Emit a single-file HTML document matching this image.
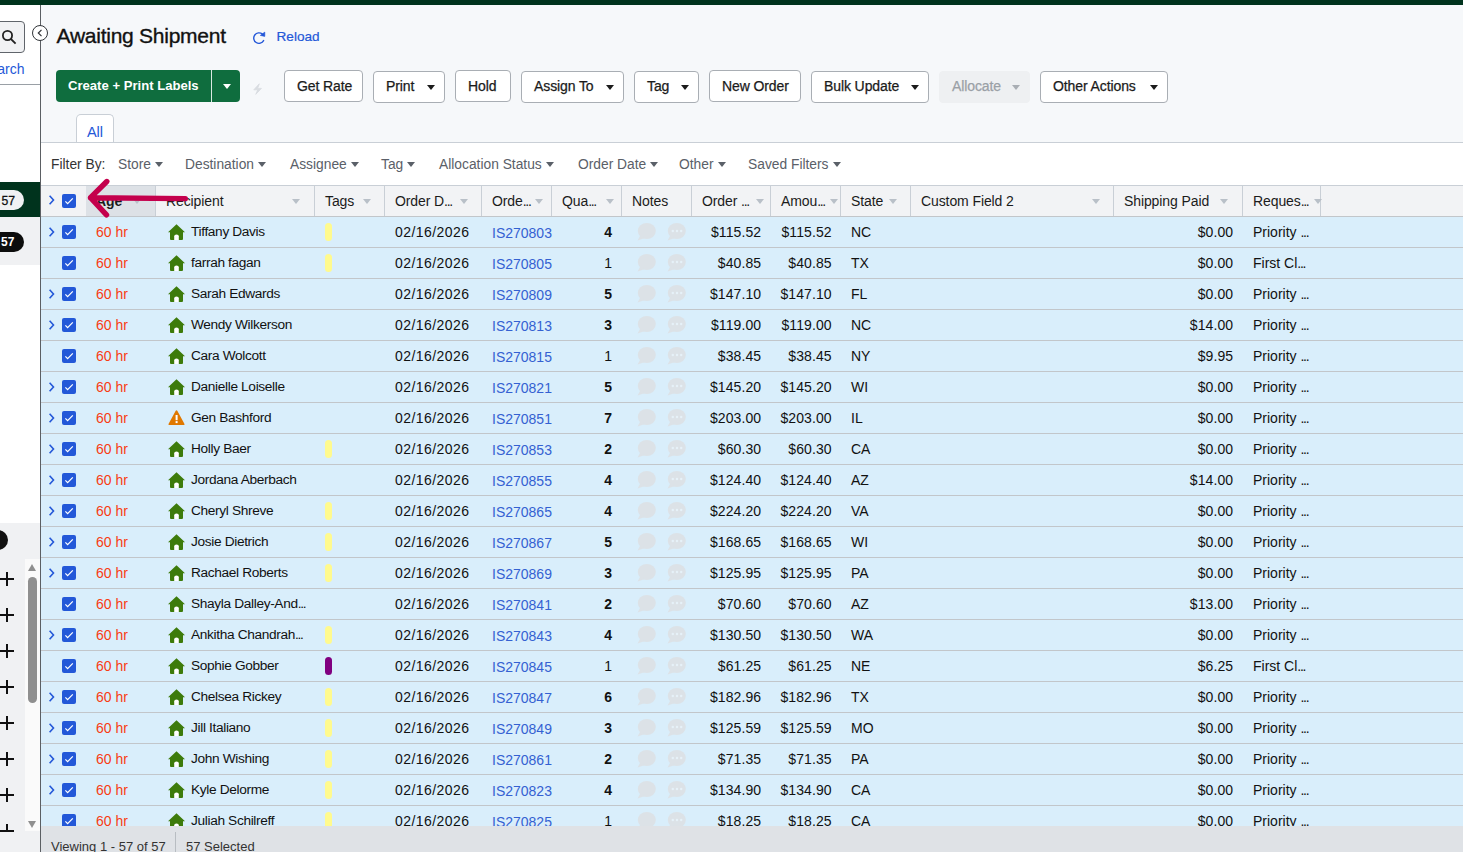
<!DOCTYPE html>
<html><head><meta charset="utf-8"><style>
*{box-sizing:border-box}
html,body{margin:0;padding:0;width:1463px;height:852px;overflow:hidden;background:#f6f8fa;font-family:"Liberation Sans",sans-serif;color:#1b1b1b}
.abs{position:absolute}
#topbar{position:absolute;left:0;top:0;width:1463px;height:5px;background:#00331d}
#side{position:absolute;left:0;top:5px;width:40px;height:847px;background:#fff;overflow:hidden}
#sideborder{position:absolute;left:40px;top:5px;width:1px;height:847px;background:#5b5f63}
#main{position:absolute;left:41px;top:5px;width:1422px;height:847px;overflow:hidden}
.search{position:absolute;left:-8px;top:16px;width:33px;height:32px;border:1px solid #60656b;border-radius:4px;background:#f1f2f4}
.collapse{position:absolute;left:32px;top:25px;width:16px;height:16px;border:1px solid #303438;border-radius:50%;background:#fff}
h1{position:absolute;left:15.5px;top:18.5px;margin:0;font-size:21px;font-weight:normal;color:#111;letter-spacing:-0.25px;line-height:24px;-webkit-text-stroke:0.35px #111}
.reload{position:absolute;left:235.5px;top:24.3px;font-size:13.6px;color:#2458d8;-webkit-text-stroke:0.2px #2458d8}
.btn{position:absolute;top:65px;height:32px;border:1px solid #a9aeb4;border-radius:4px;background:#fff;font-size:14px;letter-spacing:-0.1px;color:#1b1b1b;line-height:31.4px;padding-left:12px;white-space:nowrap;-webkit-text-stroke:0.25px #1b1b1b}
.btn.dd{top:66px;line-height:29.4px}
.btn.dd .car{top:13px}
.btn .car{position:absolute;right:9px;top:14px;width:0;height:0;border-left:4.5px solid transparent;border-right:4.5px solid transparent;border-top:5px solid #1b1b1b}
.btn.dis{background:#eef0f2;border-color:#eef0f2;color:#9aa0a6;-webkit-text-stroke:0.25px #9aa0a6}
.btn.dis .car{border-top-color:#a9aeb4}
.green{position:absolute;left:15px;top:65px;width:184px;height:32px;background:#0f6d3e;border-radius:4px;color:#fff;font-weight:bold;font-size:13.1px;line-height:32px}
.green .gt{position:absolute;left:12px;top:0}
.green .div{position:absolute;left:155px;top:0;width:1px;height:32px;background:#fff;opacity:0.85}
.green .car{position:absolute;left:167px;top:14px;width:0;height:0;border-left:4px solid transparent;border-right:4px solid transparent;border-top:5px solid #fff}
.tab{position:absolute;left:35px;top:109px;width:38px;height:29px;border:1px solid #c9cfd6;border-bottom:none;border-radius:5px 5px 0 0;background:#fff;color:#2458d8;font-size:14.6px;text-align:center;line-height:35px}
.tabline{position:absolute;left:0;top:137px;width:1422px;height:1px;background:#c9cfd6}
.filter{position:absolute;left:0;top:138px;width:1422px;height:42px;background:#fff}
.fl{position:absolute;top:14px;font-size:13.8px;color:#5a6068;white-space:nowrap}
.fl .c{display:inline-block;margin-left:4px;vertical-align:2px;width:0;height:0;border-left:4.5px solid transparent;border-right:4.5px solid transparent;border-top:5px solid #5a6068}
.header{position:absolute;left:0;top:180px;width:1422px;height:32px;background:#f2f3f5;border-top:1px solid #c9cfd6;border-bottom:1px solid #c9cfd6}
.hdiv{position:absolute;top:0;width:1px;height:30px;background:#c9cfd6}
.sortbg{position:absolute;left:45px;top:0;width:69px;height:30px;background:#dde1e6}
.el{letter-spacing:-1.3px}
.ht{position:absolute;top:7px;font-size:14px;color:#1b1b1b;white-space:nowrap;letter-spacing:-0.1px}
.ht.sorted{font-weight:bold}
.tri{position:absolute;top:13px;width:0;height:0;border-left:4.5px solid transparent;border-right:4.5px solid transparent;border-top:5px solid #b9c0c8}
.row{position:absolute;left:0;width:1422px;height:31px;background:#d9eefb;border-top:1px solid #c2c6ca}
.a{position:absolute;line-height:0}
.t{position:absolute;top:6.8px;font-size:14px;white-space:nowrap;color:#111}
.nm{font-size:13.7px;letter-spacing:-0.35px;top:7px}
.dt{letter-spacing:0.45px}
.mn{letter-spacing:0.1px}
.t.r{text-align:right}
.t.b{font-weight:bold}
.age{color:#f83c12}
.lnk{color:#3461d2;margin-top:1px}
.cb{display:inline-block;width:14px;height:14px;background:#2358d8;border-radius:2px;line-height:0}
.pill{position:absolute;left:284px;top:6px;width:7px;height:18px;border-radius:3.5px}
.pill.y{background:#fffa8e}
.pill.p{background:#800080}
.hchev{}
.status{position:absolute;left:0;top:821px;width:1422px;height:26px;background:#dfe2e6}
.st{position:absolute;top:12.8px;font-size:13px;color:#333}
.sdiv{position:absolute;left:134px;top:6px;width:1px;height:20px;background:#b8bdc2}
.plus{position:absolute;left:0;width:14px;height:14px}
.plus:before{content:"";position:absolute;left:0;top:6px;width:14px;height:2px;background:#111}
.plus:after{content:"";position:absolute;left:6px;top:0;width:2px;height:14px;background:#111}
</style></head><body>
<div id="topbar"></div>
<div id="side">
  <div class="search"><svg style="position:absolute;left:8px;top:7px" width="16" height="16" viewBox="0 0 16 16"><circle cx="6.5" cy="6.5" r="4.6" stroke="#222" stroke-width="1.8" fill="none"/><path d="M9.8 9.8 L14.6 14.6" stroke="#222" stroke-width="1.9"/></svg></div>
  <span style="position:absolute;left:-2.8px;top:56.2px;font-size:14px;color:#2458d8">arch</span>
  <div style="position:absolute;left:0;top:79px;width:40px;height:1px;background:#9aa0a6"></div>
  <div style="position:absolute;left:0;top:177px;width:40px;height:35px;background:#00331d"></div>
  <div style="position:absolute;left:-10px;top:185px;width:34px;height:20px;border-radius:10px;background:#f0f1f3;font-size:12.2px;color:#111;line-height:22px;padding-left:11.5px;-webkit-text-stroke:0.3px #111">57</div>
  <div style="position:absolute;left:0;top:212px;width:40px;height:48px;background:#f0f1f3"></div>
  <div style="position:absolute;left:-10px;top:227px;width:34px;height:20px;border-radius:10px;background:#0d0d0d;font-size:12px;color:#fff;font-weight:bold;line-height:20px;padding-left:11px">57</div>
  <div style="position:absolute;left:0;top:518px;width:40px;height:329px;background:#f0f1f3"></div>
  <div style="position:absolute;left:-12px;top:525px;width:20px;height:20px;border-radius:50%;background:#111"></div>
  <div style="position:absolute;left:0;top:554px;width:40px;height:273px;overflow:hidden"><span class="plus" style="top:13px"></span><span class="plus" style="top:49px"></span><span class="plus" style="top:85px"></span><span class="plus" style="top:121px"></span><span class="plus" style="top:157px"></span><span class="plus" style="top:193px"></span><span class="plus" style="top:229px"></span><span class="plus" style="top:265px"></span></div>
  <div style="position:absolute;left:25px;top:554px;width:15px;height:272px;background:#fafafa"></div>
  <div style="position:absolute;left:28px;top:559px;width:0;height:0;border-left:4.5px solid transparent;border-right:4.5px solid transparent;border-bottom:7px solid #8f8f8f"></div>
  <div style="position:absolute;left:28px;top:572px;width:9px;height:126px;border-radius:4.5px;background:#8f8f8f"></div>
  <div style="position:absolute;left:28px;top:816px;width:0;height:0;border-left:4.5px solid transparent;border-right:4.5px solid transparent;border-top:7px solid #8f8f8f"></div>
</div>
<div id="sideborder"></div>
<div class="collapse"><svg style="position:absolute;left:3px;top:3px" width="8" height="8" viewBox="0 0 8 8"><path d="M5.5 0.8 L2.3 4 L5.5 7.2" stroke="#303438" stroke-width="1.2" fill="none"/></svg></div>
<div id="main">
  <h1>Awaiting Shipment</h1>
  <svg style="position:absolute;left:209px;top:23px" width="18" height="18" viewBox="0 0 18 18"><path d="M12.4 6.1 A5.25 5.25 0 1 0 13.6 12.6" stroke="#2458d8" stroke-width="1.4" fill="none" stroke-linecap="round"/><path d="M14.8 4.1 L14.8 8.4 L10.3 7.4 Z" fill="#2458d8" stroke="#2458d8" stroke-width="0.6" stroke-linejoin="round"/></svg>
  <span class="reload">Reload</span>
  <div class="green"><span class="gt">Create + Print Labels</span><span class="div"></span><span class="car"></span></div>
  <svg style="position:absolute;left:211px;top:78px" width="11" height="12" viewBox="0 0 11 12"><path d="M7.3 0.8 L1.8 6.8 L5.8 6.8 L3.8 11.3 L9.4 5.4 L5.6 5.4 Z" fill="#d9dde1" stroke="#d9dde1" stroke-width="0.9" stroke-linejoin="round"/></svg>
  <div class="btn" style="left:243px;width:79px">Get Rate</div><div class="btn dd" style="left:332px;width:72px">Print<span class=car></span></div><div class="btn" style="left:414px;width:56px">Hold</div><div class="btn dd" style="left:480px;width:103px">Assign To<span class=car></span></div><div class="btn dd" style="left:593px;width:65px">Tag<span class=car></span></div><div class="btn" style="left:668px;width:92px">New Order</div><div class="btn dd" style="left:770px;width:118px">Bulk Update<span class=car></span></div><div class="btn dd dis" style="left:898px;width:91px">Allocate<span class=car></span></div><div class="btn dd" style="left:999px;width:128px">Other Actions<span class=car></span></div>
  <div class="tab">All</div>
  <div class="tabline"></div>
  <div class="filter">
    <span class="fl" style="left:10px;color:#333">Filter By:</span>
    <span class="fl" style="left:77px">Store<span class="c"></span></span><span class="fl" style="left:144px">Destination<span class="c"></span></span><span class="fl" style="left:249px">Assignee<span class="c"></span></span><span class="fl" style="left:340px">Tag<span class="c"></span></span><span class="fl" style="left:398px">Allocation Status<span class="c"></span></span><span class="fl" style="left:537px">Order Date<span class="c"></span></span><span class="fl" style="left:638px">Other<span class="c"></span></span><span class="fl" style="left:707px">Saved Filters<span class="c"></span></span>
  </div>
  <div class="header"><span class="a" style="left:7px;top:9px"><svg class="chev" width="8" height="11" viewBox="0 0 8 11"><path d="M1.6 0.7 L5.5 5 L1.6 9.3" stroke="#2458d8" stroke-width="1.6" fill="none"/></svg></span><span class="a" style="left:21px;top:8px"><span class="cb"><svg width="14" height="14" viewBox="0 0 14 14"><path d="M3.4 7.4 L5.6 9.6 L10.8 4.4" stroke="#fff" stroke-width="1.25" fill="none"/></svg></span></span><div class="sortbg"></div><span class="hdiv" style="left:114px"></span><span class="hdiv" style="left:273px"></span><span class="hdiv" style="left:343px"></span><span class="hdiv" style="left:440px"></span><span class="hdiv" style="left:510px"></span><span class="hdiv" style="left:580px"></span><span class="hdiv" style="left:650px"></span><span class="hdiv" style="left:729px"></span><span class="hdiv" style="left:799px"></span><span class="hdiv" style="left:869px"></span><span class="hdiv" style="left:1072px"></span><span class="hdiv" style="left:1201px"></span><span class="hdiv" style="left:1279px"></span><span class="ht sorted" style="left:55px">Age</span><span class="tri" style="left:92px"></span><span class="ht" style="left:125px">Recipient</span><span class="tri" style="left:251.2px"></span><span class="ht" style="left:284px">Tags</span><span class="tri" style="left:321.6px"></span><span class="ht" style="left:354px">Order D<span class="el">...</span></span><span class="tri" style="left:419.3px"></span><span class="ht" style="left:451px">Orde<span class="el">...</span></span><span class="tri" style="left:493.70000000000005px"></span><span class="ht" style="left:521px">Qua<span class="el">...</span></span><span class="tri" style="left:564.8px"></span><span class="ht" style="left:591px">Notes</span><span class="ht" style="left:661px">Order <span class="el">...</span></span><span class="tri" style="left:715.4px"></span><span class="ht" style="left:740px">Amou<span class="el">...</span></span><span class="tri" style="left:789.2px"></span><span class="ht" style="left:810px">State</span><span class="tri" style="left:847.6px"></span><span class="ht" style="left:880px">Custom Field 2</span><span class="tri" style="left:1050.6px"></span><span class="ht" style="left:1083px">Shipping Paid</span><span class="tri" style="left:1179.3px"></span><span class="ht" style="left:1212px">Reques<span class="el">...</span></span><span class="tri" style="left:1273px"></span></div>
  <div class="row" style="top:211px"><span class="a" style="left:7px;top:10px"><svg class="chev" width="8" height="11" viewBox="0 0 8 11"><path d="M1.6 0.7 L5.5 5 L1.6 9.3" stroke="#2458d8" stroke-width="1.6" fill="none"/></svg></span><span class="a" style="left:21px;top:8px"><span class="cb"><svg width="14" height="14" viewBox="0 0 14 14"><path d="M3.4 7.4 L5.6 9.6 L10.8 4.4" stroke="#fff" stroke-width="1.25" fill="none"/></svg></span></span><span class="t age" style="left:55px">60 hr</span><span class="a" style="left:126.5px;top:7px"><svg class="ic" width="17" height="17" viewBox="0 0 17 17"><path d="M8.5 0.3 L17 8.2 L15 8.2 L15 15 Q15 16 14 16 L3 16 Q2 16 2 15 L2 8.2 L0 8.2 Z" fill="#3d7b0b"/><path d="M6.2 16 L6.2 12.2 Q6.2 10.4 8.5 10.4 Q10.8 10.4 10.8 12.2 L10.8 16 Z" fill="#fff"/></svg></span><span class="t nm" style="left:150px">Tiffany Davis</span><span class="pill y"></span><span class="t dt" style="left:354px">02/16/2026</span><span class="t lnk" style="left:451px">IS270803</span><span class="t r b" style="right:851px">4</span><span class="a" style="left:596.3px;top:5.5px"><svg width="19" height="18" viewBox="0 0 19 18"><ellipse cx="9.8" cy="8" rx="9" ry="8" fill="#dce2e7"/><path d="M3.5 12 L0.6 17.4 L8 15Z" fill="#dce2e7"/></svg></span><span class="a" style="left:626.3px;top:5.5px"><svg width="19" height="18" viewBox="0 0 19 18"><ellipse cx="9.8" cy="8" rx="9" ry="8" fill="#dce2e7"/><path d="M3.5 12 L0.6 17.4 L8 15Z" fill="#dce2e7"/><circle cx="5.8" cy="8" r="1.2" fill="#e6f1f8"/><circle cx="10" cy="8" r="1.2" fill="#e6f1f8"/><circle cx="14.2" cy="8" r="1.2" fill="#e6f1f8"/></svg></span><span class="t r mn" style="right:701.8px">$115.52</span><span class="t r mn" style="right:631.3px">$115.52</span><span class="t" style="left:810px">NC</span><span class="t r mn" style="right:229.8px">$0.00</span><span class="t" style="left:1212px">Priority <span class=el>...</span></span></div><div class="row" style="top:242px"><span class="a" style="left:21px;top:8px"><span class="cb"><svg width="14" height="14" viewBox="0 0 14 14"><path d="M3.4 7.4 L5.6 9.6 L10.8 4.4" stroke="#fff" stroke-width="1.25" fill="none"/></svg></span></span><span class="t age" style="left:55px">60 hr</span><span class="a" style="left:126.5px;top:7px"><svg class="ic" width="17" height="17" viewBox="0 0 17 17"><path d="M8.5 0.3 L17 8.2 L15 8.2 L15 15 Q15 16 14 16 L3 16 Q2 16 2 15 L2 8.2 L0 8.2 Z" fill="#3d7b0b"/><path d="M6.2 16 L6.2 12.2 Q6.2 10.4 8.5 10.4 Q10.8 10.4 10.8 12.2 L10.8 16 Z" fill="#fff"/></svg></span><span class="t nm" style="left:150px">farrah fagan</span><span class="pill y"></span><span class="t dt" style="left:354px">02/16/2026</span><span class="t lnk" style="left:451px">IS270805</span><span class="t r" style="right:851px">1</span><span class="a" style="left:596.3px;top:5.5px"><svg width="19" height="18" viewBox="0 0 19 18"><ellipse cx="9.8" cy="8" rx="9" ry="8" fill="#dce2e7"/><path d="M3.5 12 L0.6 17.4 L8 15Z" fill="#dce2e7"/></svg></span><span class="a" style="left:626.3px;top:5.5px"><svg width="19" height="18" viewBox="0 0 19 18"><ellipse cx="9.8" cy="8" rx="9" ry="8" fill="#dce2e7"/><path d="M3.5 12 L0.6 17.4 L8 15Z" fill="#dce2e7"/><circle cx="5.8" cy="8" r="1.2" fill="#e6f1f8"/><circle cx="10" cy="8" r="1.2" fill="#e6f1f8"/><circle cx="14.2" cy="8" r="1.2" fill="#e6f1f8"/></svg></span><span class="t r mn" style="right:701.8px">$40.85</span><span class="t r mn" style="right:631.3px">$40.85</span><span class="t" style="left:810px">TX</span><span class="t r mn" style="right:229.8px">$0.00</span><span class="t" style="left:1212px">First Cl<span class=el>...</span></span></div><div class="row" style="top:273px"><span class="a" style="left:7px;top:10px"><svg class="chev" width="8" height="11" viewBox="0 0 8 11"><path d="M1.6 0.7 L5.5 5 L1.6 9.3" stroke="#2458d8" stroke-width="1.6" fill="none"/></svg></span><span class="a" style="left:21px;top:8px"><span class="cb"><svg width="14" height="14" viewBox="0 0 14 14"><path d="M3.4 7.4 L5.6 9.6 L10.8 4.4" stroke="#fff" stroke-width="1.25" fill="none"/></svg></span></span><span class="t age" style="left:55px">60 hr</span><span class="a" style="left:126.5px;top:7px"><svg class="ic" width="17" height="17" viewBox="0 0 17 17"><path d="M8.5 0.3 L17 8.2 L15 8.2 L15 15 Q15 16 14 16 L3 16 Q2 16 2 15 L2 8.2 L0 8.2 Z" fill="#3d7b0b"/><path d="M6.2 16 L6.2 12.2 Q6.2 10.4 8.5 10.4 Q10.8 10.4 10.8 12.2 L10.8 16 Z" fill="#fff"/></svg></span><span class="t nm" style="left:150px">Sarah Edwards</span><span class="t dt" style="left:354px">02/16/2026</span><span class="t lnk" style="left:451px">IS270809</span><span class="t r b" style="right:851px">5</span><span class="a" style="left:596.3px;top:5.5px"><svg width="19" height="18" viewBox="0 0 19 18"><ellipse cx="9.8" cy="8" rx="9" ry="8" fill="#dce2e7"/><path d="M3.5 12 L0.6 17.4 L8 15Z" fill="#dce2e7"/></svg></span><span class="a" style="left:626.3px;top:5.5px"><svg width="19" height="18" viewBox="0 0 19 18"><ellipse cx="9.8" cy="8" rx="9" ry="8" fill="#dce2e7"/><path d="M3.5 12 L0.6 17.4 L8 15Z" fill="#dce2e7"/><circle cx="5.8" cy="8" r="1.2" fill="#e6f1f8"/><circle cx="10" cy="8" r="1.2" fill="#e6f1f8"/><circle cx="14.2" cy="8" r="1.2" fill="#e6f1f8"/></svg></span><span class="t r mn" style="right:701.8px">$147.10</span><span class="t r mn" style="right:631.3px">$147.10</span><span class="t" style="left:810px">FL</span><span class="t r mn" style="right:229.8px">$0.00</span><span class="t" style="left:1212px">Priority <span class=el>...</span></span></div><div class="row" style="top:304px"><span class="a" style="left:7px;top:10px"><svg class="chev" width="8" height="11" viewBox="0 0 8 11"><path d="M1.6 0.7 L5.5 5 L1.6 9.3" stroke="#2458d8" stroke-width="1.6" fill="none"/></svg></span><span class="a" style="left:21px;top:8px"><span class="cb"><svg width="14" height="14" viewBox="0 0 14 14"><path d="M3.4 7.4 L5.6 9.6 L10.8 4.4" stroke="#fff" stroke-width="1.25" fill="none"/></svg></span></span><span class="t age" style="left:55px">60 hr</span><span class="a" style="left:126.5px;top:7px"><svg class="ic" width="17" height="17" viewBox="0 0 17 17"><path d="M8.5 0.3 L17 8.2 L15 8.2 L15 15 Q15 16 14 16 L3 16 Q2 16 2 15 L2 8.2 L0 8.2 Z" fill="#3d7b0b"/><path d="M6.2 16 L6.2 12.2 Q6.2 10.4 8.5 10.4 Q10.8 10.4 10.8 12.2 L10.8 16 Z" fill="#fff"/></svg></span><span class="t nm" style="left:150px">Wendy Wilkerson</span><span class="t dt" style="left:354px">02/16/2026</span><span class="t lnk" style="left:451px">IS270813</span><span class="t r b" style="right:851px">3</span><span class="a" style="left:596.3px;top:5.5px"><svg width="19" height="18" viewBox="0 0 19 18"><ellipse cx="9.8" cy="8" rx="9" ry="8" fill="#dce2e7"/><path d="M3.5 12 L0.6 17.4 L8 15Z" fill="#dce2e7"/></svg></span><span class="a" style="left:626.3px;top:5.5px"><svg width="19" height="18" viewBox="0 0 19 18"><ellipse cx="9.8" cy="8" rx="9" ry="8" fill="#dce2e7"/><path d="M3.5 12 L0.6 17.4 L8 15Z" fill="#dce2e7"/><circle cx="5.8" cy="8" r="1.2" fill="#e6f1f8"/><circle cx="10" cy="8" r="1.2" fill="#e6f1f8"/><circle cx="14.2" cy="8" r="1.2" fill="#e6f1f8"/></svg></span><span class="t r mn" style="right:701.8px">$119.00</span><span class="t r mn" style="right:631.3px">$119.00</span><span class="t" style="left:810px">NC</span><span class="t r mn" style="right:229.8px">$14.00</span><span class="t" style="left:1212px">Priority <span class=el>...</span></span></div><div class="row" style="top:335px"><span class="a" style="left:21px;top:8px"><span class="cb"><svg width="14" height="14" viewBox="0 0 14 14"><path d="M3.4 7.4 L5.6 9.6 L10.8 4.4" stroke="#fff" stroke-width="1.25" fill="none"/></svg></span></span><span class="t age" style="left:55px">60 hr</span><span class="a" style="left:126.5px;top:7px"><svg class="ic" width="17" height="17" viewBox="0 0 17 17"><path d="M8.5 0.3 L17 8.2 L15 8.2 L15 15 Q15 16 14 16 L3 16 Q2 16 2 15 L2 8.2 L0 8.2 Z" fill="#3d7b0b"/><path d="M6.2 16 L6.2 12.2 Q6.2 10.4 8.5 10.4 Q10.8 10.4 10.8 12.2 L10.8 16 Z" fill="#fff"/></svg></span><span class="t nm" style="left:150px">Cara Wolcott</span><span class="t dt" style="left:354px">02/16/2026</span><span class="t lnk" style="left:451px">IS270815</span><span class="t r" style="right:851px">1</span><span class="a" style="left:596.3px;top:5.5px"><svg width="19" height="18" viewBox="0 0 19 18"><ellipse cx="9.8" cy="8" rx="9" ry="8" fill="#dce2e7"/><path d="M3.5 12 L0.6 17.4 L8 15Z" fill="#dce2e7"/></svg></span><span class="a" style="left:626.3px;top:5.5px"><svg width="19" height="18" viewBox="0 0 19 18"><ellipse cx="9.8" cy="8" rx="9" ry="8" fill="#dce2e7"/><path d="M3.5 12 L0.6 17.4 L8 15Z" fill="#dce2e7"/><circle cx="5.8" cy="8" r="1.2" fill="#e6f1f8"/><circle cx="10" cy="8" r="1.2" fill="#e6f1f8"/><circle cx="14.2" cy="8" r="1.2" fill="#e6f1f8"/></svg></span><span class="t r mn" style="right:701.8px">$38.45</span><span class="t r mn" style="right:631.3px">$38.45</span><span class="t" style="left:810px">NY</span><span class="t r mn" style="right:229.8px">$9.95</span><span class="t" style="left:1212px">Priority <span class=el>...</span></span></div><div class="row" style="top:366px"><span class="a" style="left:7px;top:10px"><svg class="chev" width="8" height="11" viewBox="0 0 8 11"><path d="M1.6 0.7 L5.5 5 L1.6 9.3" stroke="#2458d8" stroke-width="1.6" fill="none"/></svg></span><span class="a" style="left:21px;top:8px"><span class="cb"><svg width="14" height="14" viewBox="0 0 14 14"><path d="M3.4 7.4 L5.6 9.6 L10.8 4.4" stroke="#fff" stroke-width="1.25" fill="none"/></svg></span></span><span class="t age" style="left:55px">60 hr</span><span class="a" style="left:126.5px;top:7px"><svg class="ic" width="17" height="17" viewBox="0 0 17 17"><path d="M8.5 0.3 L17 8.2 L15 8.2 L15 15 Q15 16 14 16 L3 16 Q2 16 2 15 L2 8.2 L0 8.2 Z" fill="#3d7b0b"/><path d="M6.2 16 L6.2 12.2 Q6.2 10.4 8.5 10.4 Q10.8 10.4 10.8 12.2 L10.8 16 Z" fill="#fff"/></svg></span><span class="t nm" style="left:150px">Danielle Loiselle</span><span class="t dt" style="left:354px">02/16/2026</span><span class="t lnk" style="left:451px">IS270821</span><span class="t r b" style="right:851px">5</span><span class="a" style="left:596.3px;top:5.5px"><svg width="19" height="18" viewBox="0 0 19 18"><ellipse cx="9.8" cy="8" rx="9" ry="8" fill="#dce2e7"/><path d="M3.5 12 L0.6 17.4 L8 15Z" fill="#dce2e7"/></svg></span><span class="a" style="left:626.3px;top:5.5px"><svg width="19" height="18" viewBox="0 0 19 18"><ellipse cx="9.8" cy="8" rx="9" ry="8" fill="#dce2e7"/><path d="M3.5 12 L0.6 17.4 L8 15Z" fill="#dce2e7"/><circle cx="5.8" cy="8" r="1.2" fill="#e6f1f8"/><circle cx="10" cy="8" r="1.2" fill="#e6f1f8"/><circle cx="14.2" cy="8" r="1.2" fill="#e6f1f8"/></svg></span><span class="t r mn" style="right:701.8px">$145.20</span><span class="t r mn" style="right:631.3px">$145.20</span><span class="t" style="left:810px">WI</span><span class="t r mn" style="right:229.8px">$0.00</span><span class="t" style="left:1212px">Priority <span class=el>...</span></span></div><div class="row" style="top:397px"><span class="a" style="left:7px;top:10px"><svg class="chev" width="8" height="11" viewBox="0 0 8 11"><path d="M1.6 0.7 L5.5 5 L1.6 9.3" stroke="#2458d8" stroke-width="1.6" fill="none"/></svg></span><span class="a" style="left:21px;top:8px"><span class="cb"><svg width="14" height="14" viewBox="0 0 14 14"><path d="M3.4 7.4 L5.6 9.6 L10.8 4.4" stroke="#fff" stroke-width="1.25" fill="none"/></svg></span></span><span class="t age" style="left:55px">60 hr</span><span class="a" style="left:126.5px;top:7px"><svg class="ic" width="17" height="17" viewBox="0 0 17 17"><path d="M8.5 0.2 Q9 0.2 9.3 0.8 L16.5 14 Q16.9 15 15.8 15 L1.2 15 Q0.1 15 0.5 14 L7.7 0.8 Q8 0.2 8.5 0.2Z" fill="#e07800"/><rect x="7.6" y="5" width="2" height="5.2" fill="#fff"/><rect x="7.6" y="11.1" width="2" height="2" fill="#fff"/></svg></span><span class="t nm" style="left:150px">Gen Bashford</span><span class="t dt" style="left:354px">02/16/2026</span><span class="t lnk" style="left:451px">IS270851</span><span class="t r b" style="right:851px">7</span><span class="a" style="left:596.3px;top:5.5px"><svg width="19" height="18" viewBox="0 0 19 18"><ellipse cx="9.8" cy="8" rx="9" ry="8" fill="#dce2e7"/><path d="M3.5 12 L0.6 17.4 L8 15Z" fill="#dce2e7"/></svg></span><span class="a" style="left:626.3px;top:5.5px"><svg width="19" height="18" viewBox="0 0 19 18"><ellipse cx="9.8" cy="8" rx="9" ry="8" fill="#dce2e7"/><path d="M3.5 12 L0.6 17.4 L8 15Z" fill="#dce2e7"/><circle cx="5.8" cy="8" r="1.2" fill="#e6f1f8"/><circle cx="10" cy="8" r="1.2" fill="#e6f1f8"/><circle cx="14.2" cy="8" r="1.2" fill="#e6f1f8"/></svg></span><span class="t r mn" style="right:701.8px">$203.00</span><span class="t r mn" style="right:631.3px">$203.00</span><span class="t" style="left:810px">IL</span><span class="t r mn" style="right:229.8px">$0.00</span><span class="t" style="left:1212px">Priority <span class=el>...</span></span></div><div class="row" style="top:428px"><span class="a" style="left:7px;top:10px"><svg class="chev" width="8" height="11" viewBox="0 0 8 11"><path d="M1.6 0.7 L5.5 5 L1.6 9.3" stroke="#2458d8" stroke-width="1.6" fill="none"/></svg></span><span class="a" style="left:21px;top:8px"><span class="cb"><svg width="14" height="14" viewBox="0 0 14 14"><path d="M3.4 7.4 L5.6 9.6 L10.8 4.4" stroke="#fff" stroke-width="1.25" fill="none"/></svg></span></span><span class="t age" style="left:55px">60 hr</span><span class="a" style="left:126.5px;top:7px"><svg class="ic" width="17" height="17" viewBox="0 0 17 17"><path d="M8.5 0.3 L17 8.2 L15 8.2 L15 15 Q15 16 14 16 L3 16 Q2 16 2 15 L2 8.2 L0 8.2 Z" fill="#3d7b0b"/><path d="M6.2 16 L6.2 12.2 Q6.2 10.4 8.5 10.4 Q10.8 10.4 10.8 12.2 L10.8 16 Z" fill="#fff"/></svg></span><span class="t nm" style="left:150px">Holly Baer</span><span class="pill y"></span><span class="t dt" style="left:354px">02/16/2026</span><span class="t lnk" style="left:451px">IS270853</span><span class="t r b" style="right:851px">2</span><span class="a" style="left:596.3px;top:5.5px"><svg width="19" height="18" viewBox="0 0 19 18"><ellipse cx="9.8" cy="8" rx="9" ry="8" fill="#dce2e7"/><path d="M3.5 12 L0.6 17.4 L8 15Z" fill="#dce2e7"/></svg></span><span class="a" style="left:626.3px;top:5.5px"><svg width="19" height="18" viewBox="0 0 19 18"><ellipse cx="9.8" cy="8" rx="9" ry="8" fill="#dce2e7"/><path d="M3.5 12 L0.6 17.4 L8 15Z" fill="#dce2e7"/><circle cx="5.8" cy="8" r="1.2" fill="#e6f1f8"/><circle cx="10" cy="8" r="1.2" fill="#e6f1f8"/><circle cx="14.2" cy="8" r="1.2" fill="#e6f1f8"/></svg></span><span class="t r mn" style="right:701.8px">$60.30</span><span class="t r mn" style="right:631.3px">$60.30</span><span class="t" style="left:810px">CA</span><span class="t r mn" style="right:229.8px">$0.00</span><span class="t" style="left:1212px">Priority <span class=el>...</span></span></div><div class="row" style="top:459px"><span class="a" style="left:7px;top:10px"><svg class="chev" width="8" height="11" viewBox="0 0 8 11"><path d="M1.6 0.7 L5.5 5 L1.6 9.3" stroke="#2458d8" stroke-width="1.6" fill="none"/></svg></span><span class="a" style="left:21px;top:8px"><span class="cb"><svg width="14" height="14" viewBox="0 0 14 14"><path d="M3.4 7.4 L5.6 9.6 L10.8 4.4" stroke="#fff" stroke-width="1.25" fill="none"/></svg></span></span><span class="t age" style="left:55px">60 hr</span><span class="a" style="left:126.5px;top:7px"><svg class="ic" width="17" height="17" viewBox="0 0 17 17"><path d="M8.5 0.3 L17 8.2 L15 8.2 L15 15 Q15 16 14 16 L3 16 Q2 16 2 15 L2 8.2 L0 8.2 Z" fill="#3d7b0b"/><path d="M6.2 16 L6.2 12.2 Q6.2 10.4 8.5 10.4 Q10.8 10.4 10.8 12.2 L10.8 16 Z" fill="#fff"/></svg></span><span class="t nm" style="left:150px">Jordana Aberbach</span><span class="t dt" style="left:354px">02/16/2026</span><span class="t lnk" style="left:451px">IS270855</span><span class="t r b" style="right:851px">4</span><span class="a" style="left:596.3px;top:5.5px"><svg width="19" height="18" viewBox="0 0 19 18"><ellipse cx="9.8" cy="8" rx="9" ry="8" fill="#dce2e7"/><path d="M3.5 12 L0.6 17.4 L8 15Z" fill="#dce2e7"/></svg></span><span class="a" style="left:626.3px;top:5.5px"><svg width="19" height="18" viewBox="0 0 19 18"><ellipse cx="9.8" cy="8" rx="9" ry="8" fill="#dce2e7"/><path d="M3.5 12 L0.6 17.4 L8 15Z" fill="#dce2e7"/><circle cx="5.8" cy="8" r="1.2" fill="#e6f1f8"/><circle cx="10" cy="8" r="1.2" fill="#e6f1f8"/><circle cx="14.2" cy="8" r="1.2" fill="#e6f1f8"/></svg></span><span class="t r mn" style="right:701.8px">$124.40</span><span class="t r mn" style="right:631.3px">$124.40</span><span class="t" style="left:810px">AZ</span><span class="t r mn" style="right:229.8px">$14.00</span><span class="t" style="left:1212px">Priority <span class=el>...</span></span></div><div class="row" style="top:490px"><span class="a" style="left:7px;top:10px"><svg class="chev" width="8" height="11" viewBox="0 0 8 11"><path d="M1.6 0.7 L5.5 5 L1.6 9.3" stroke="#2458d8" stroke-width="1.6" fill="none"/></svg></span><span class="a" style="left:21px;top:8px"><span class="cb"><svg width="14" height="14" viewBox="0 0 14 14"><path d="M3.4 7.4 L5.6 9.6 L10.8 4.4" stroke="#fff" stroke-width="1.25" fill="none"/></svg></span></span><span class="t age" style="left:55px">60 hr</span><span class="a" style="left:126.5px;top:7px"><svg class="ic" width="17" height="17" viewBox="0 0 17 17"><path d="M8.5 0.3 L17 8.2 L15 8.2 L15 15 Q15 16 14 16 L3 16 Q2 16 2 15 L2 8.2 L0 8.2 Z" fill="#3d7b0b"/><path d="M6.2 16 L6.2 12.2 Q6.2 10.4 8.5 10.4 Q10.8 10.4 10.8 12.2 L10.8 16 Z" fill="#fff"/></svg></span><span class="t nm" style="left:150px">Cheryl Shreve</span><span class="pill y"></span><span class="t dt" style="left:354px">02/16/2026</span><span class="t lnk" style="left:451px">IS270865</span><span class="t r b" style="right:851px">4</span><span class="a" style="left:596.3px;top:5.5px"><svg width="19" height="18" viewBox="0 0 19 18"><ellipse cx="9.8" cy="8" rx="9" ry="8" fill="#dce2e7"/><path d="M3.5 12 L0.6 17.4 L8 15Z" fill="#dce2e7"/></svg></span><span class="a" style="left:626.3px;top:5.5px"><svg width="19" height="18" viewBox="0 0 19 18"><ellipse cx="9.8" cy="8" rx="9" ry="8" fill="#dce2e7"/><path d="M3.5 12 L0.6 17.4 L8 15Z" fill="#dce2e7"/><circle cx="5.8" cy="8" r="1.2" fill="#e6f1f8"/><circle cx="10" cy="8" r="1.2" fill="#e6f1f8"/><circle cx="14.2" cy="8" r="1.2" fill="#e6f1f8"/></svg></span><span class="t r mn" style="right:701.8px">$224.20</span><span class="t r mn" style="right:631.3px">$224.20</span><span class="t" style="left:810px">VA</span><span class="t r mn" style="right:229.8px">$0.00</span><span class="t" style="left:1212px">Priority <span class=el>...</span></span></div><div class="row" style="top:521px"><span class="a" style="left:7px;top:10px"><svg class="chev" width="8" height="11" viewBox="0 0 8 11"><path d="M1.6 0.7 L5.5 5 L1.6 9.3" stroke="#2458d8" stroke-width="1.6" fill="none"/></svg></span><span class="a" style="left:21px;top:8px"><span class="cb"><svg width="14" height="14" viewBox="0 0 14 14"><path d="M3.4 7.4 L5.6 9.6 L10.8 4.4" stroke="#fff" stroke-width="1.25" fill="none"/></svg></span></span><span class="t age" style="left:55px">60 hr</span><span class="a" style="left:126.5px;top:7px"><svg class="ic" width="17" height="17" viewBox="0 0 17 17"><path d="M8.5 0.3 L17 8.2 L15 8.2 L15 15 Q15 16 14 16 L3 16 Q2 16 2 15 L2 8.2 L0 8.2 Z" fill="#3d7b0b"/><path d="M6.2 16 L6.2 12.2 Q6.2 10.4 8.5 10.4 Q10.8 10.4 10.8 12.2 L10.8 16 Z" fill="#fff"/></svg></span><span class="t nm" style="left:150px">Josie Dietrich</span><span class="pill y"></span><span class="t dt" style="left:354px">02/16/2026</span><span class="t lnk" style="left:451px">IS270867</span><span class="t r b" style="right:851px">5</span><span class="a" style="left:596.3px;top:5.5px"><svg width="19" height="18" viewBox="0 0 19 18"><ellipse cx="9.8" cy="8" rx="9" ry="8" fill="#dce2e7"/><path d="M3.5 12 L0.6 17.4 L8 15Z" fill="#dce2e7"/></svg></span><span class="a" style="left:626.3px;top:5.5px"><svg width="19" height="18" viewBox="0 0 19 18"><ellipse cx="9.8" cy="8" rx="9" ry="8" fill="#dce2e7"/><path d="M3.5 12 L0.6 17.4 L8 15Z" fill="#dce2e7"/><circle cx="5.8" cy="8" r="1.2" fill="#e6f1f8"/><circle cx="10" cy="8" r="1.2" fill="#e6f1f8"/><circle cx="14.2" cy="8" r="1.2" fill="#e6f1f8"/></svg></span><span class="t r mn" style="right:701.8px">$168.65</span><span class="t r mn" style="right:631.3px">$168.65</span><span class="t" style="left:810px">WI</span><span class="t r mn" style="right:229.8px">$0.00</span><span class="t" style="left:1212px">Priority <span class=el>...</span></span></div><div class="row" style="top:552px"><span class="a" style="left:7px;top:10px"><svg class="chev" width="8" height="11" viewBox="0 0 8 11"><path d="M1.6 0.7 L5.5 5 L1.6 9.3" stroke="#2458d8" stroke-width="1.6" fill="none"/></svg></span><span class="a" style="left:21px;top:8px"><span class="cb"><svg width="14" height="14" viewBox="0 0 14 14"><path d="M3.4 7.4 L5.6 9.6 L10.8 4.4" stroke="#fff" stroke-width="1.25" fill="none"/></svg></span></span><span class="t age" style="left:55px">60 hr</span><span class="a" style="left:126.5px;top:7px"><svg class="ic" width="17" height="17" viewBox="0 0 17 17"><path d="M8.5 0.3 L17 8.2 L15 8.2 L15 15 Q15 16 14 16 L3 16 Q2 16 2 15 L2 8.2 L0 8.2 Z" fill="#3d7b0b"/><path d="M6.2 16 L6.2 12.2 Q6.2 10.4 8.5 10.4 Q10.8 10.4 10.8 12.2 L10.8 16 Z" fill="#fff"/></svg></span><span class="t nm" style="left:150px">Rachael Roberts</span><span class="pill y"></span><span class="t dt" style="left:354px">02/16/2026</span><span class="t lnk" style="left:451px">IS270869</span><span class="t r b" style="right:851px">3</span><span class="a" style="left:596.3px;top:5.5px"><svg width="19" height="18" viewBox="0 0 19 18"><ellipse cx="9.8" cy="8" rx="9" ry="8" fill="#dce2e7"/><path d="M3.5 12 L0.6 17.4 L8 15Z" fill="#dce2e7"/></svg></span><span class="a" style="left:626.3px;top:5.5px"><svg width="19" height="18" viewBox="0 0 19 18"><ellipse cx="9.8" cy="8" rx="9" ry="8" fill="#dce2e7"/><path d="M3.5 12 L0.6 17.4 L8 15Z" fill="#dce2e7"/><circle cx="5.8" cy="8" r="1.2" fill="#e6f1f8"/><circle cx="10" cy="8" r="1.2" fill="#e6f1f8"/><circle cx="14.2" cy="8" r="1.2" fill="#e6f1f8"/></svg></span><span class="t r mn" style="right:701.8px">$125.95</span><span class="t r mn" style="right:631.3px">$125.95</span><span class="t" style="left:810px">PA</span><span class="t r mn" style="right:229.8px">$0.00</span><span class="t" style="left:1212px">Priority <span class=el>...</span></span></div><div class="row" style="top:583px"><span class="a" style="left:21px;top:8px"><span class="cb"><svg width="14" height="14" viewBox="0 0 14 14"><path d="M3.4 7.4 L5.6 9.6 L10.8 4.4" stroke="#fff" stroke-width="1.25" fill="none"/></svg></span></span><span class="t age" style="left:55px">60 hr</span><span class="a" style="left:126.5px;top:7px"><svg class="ic" width="17" height="17" viewBox="0 0 17 17"><path d="M8.5 0.3 L17 8.2 L15 8.2 L15 15 Q15 16 14 16 L3 16 Q2 16 2 15 L2 8.2 L0 8.2 Z" fill="#3d7b0b"/><path d="M6.2 16 L6.2 12.2 Q6.2 10.4 8.5 10.4 Q10.8 10.4 10.8 12.2 L10.8 16 Z" fill="#fff"/></svg></span><span class="t nm" style="left:150px">Shayla Dalley-And<span class=el>...</span></span><span class="t dt" style="left:354px">02/16/2026</span><span class="t lnk" style="left:451px">IS270841</span><span class="t r b" style="right:851px">2</span><span class="a" style="left:596.3px;top:5.5px"><svg width="19" height="18" viewBox="0 0 19 18"><ellipse cx="9.8" cy="8" rx="9" ry="8" fill="#dce2e7"/><path d="M3.5 12 L0.6 17.4 L8 15Z" fill="#dce2e7"/></svg></span><span class="a" style="left:626.3px;top:5.5px"><svg width="19" height="18" viewBox="0 0 19 18"><ellipse cx="9.8" cy="8" rx="9" ry="8" fill="#dce2e7"/><path d="M3.5 12 L0.6 17.4 L8 15Z" fill="#dce2e7"/><circle cx="5.8" cy="8" r="1.2" fill="#e6f1f8"/><circle cx="10" cy="8" r="1.2" fill="#e6f1f8"/><circle cx="14.2" cy="8" r="1.2" fill="#e6f1f8"/></svg></span><span class="t r mn" style="right:701.8px">$70.60</span><span class="t r mn" style="right:631.3px">$70.60</span><span class="t" style="left:810px">AZ</span><span class="t r mn" style="right:229.8px">$13.00</span><span class="t" style="left:1212px">Priority <span class=el>...</span></span></div><div class="row" style="top:614px"><span class="a" style="left:7px;top:10px"><svg class="chev" width="8" height="11" viewBox="0 0 8 11"><path d="M1.6 0.7 L5.5 5 L1.6 9.3" stroke="#2458d8" stroke-width="1.6" fill="none"/></svg></span><span class="a" style="left:21px;top:8px"><span class="cb"><svg width="14" height="14" viewBox="0 0 14 14"><path d="M3.4 7.4 L5.6 9.6 L10.8 4.4" stroke="#fff" stroke-width="1.25" fill="none"/></svg></span></span><span class="t age" style="left:55px">60 hr</span><span class="a" style="left:126.5px;top:7px"><svg class="ic" width="17" height="17" viewBox="0 0 17 17"><path d="M8.5 0.3 L17 8.2 L15 8.2 L15 15 Q15 16 14 16 L3 16 Q2 16 2 15 L2 8.2 L0 8.2 Z" fill="#3d7b0b"/><path d="M6.2 16 L6.2 12.2 Q6.2 10.4 8.5 10.4 Q10.8 10.4 10.8 12.2 L10.8 16 Z" fill="#fff"/></svg></span><span class="t nm" style="left:150px">Ankitha Chandrah<span class=el>...</span></span><span class="pill y"></span><span class="t dt" style="left:354px">02/16/2026</span><span class="t lnk" style="left:451px">IS270843</span><span class="t r b" style="right:851px">4</span><span class="a" style="left:596.3px;top:5.5px"><svg width="19" height="18" viewBox="0 0 19 18"><ellipse cx="9.8" cy="8" rx="9" ry="8" fill="#dce2e7"/><path d="M3.5 12 L0.6 17.4 L8 15Z" fill="#dce2e7"/></svg></span><span class="a" style="left:626.3px;top:5.5px"><svg width="19" height="18" viewBox="0 0 19 18"><ellipse cx="9.8" cy="8" rx="9" ry="8" fill="#dce2e7"/><path d="M3.5 12 L0.6 17.4 L8 15Z" fill="#dce2e7"/><circle cx="5.8" cy="8" r="1.2" fill="#e6f1f8"/><circle cx="10" cy="8" r="1.2" fill="#e6f1f8"/><circle cx="14.2" cy="8" r="1.2" fill="#e6f1f8"/></svg></span><span class="t r mn" style="right:701.8px">$130.50</span><span class="t r mn" style="right:631.3px">$130.50</span><span class="t" style="left:810px">WA</span><span class="t r mn" style="right:229.8px">$0.00</span><span class="t" style="left:1212px">Priority <span class=el>...</span></span></div><div class="row" style="top:645px"><span class="a" style="left:21px;top:8px"><span class="cb"><svg width="14" height="14" viewBox="0 0 14 14"><path d="M3.4 7.4 L5.6 9.6 L10.8 4.4" stroke="#fff" stroke-width="1.25" fill="none"/></svg></span></span><span class="t age" style="left:55px">60 hr</span><span class="a" style="left:126.5px;top:7px"><svg class="ic" width="17" height="17" viewBox="0 0 17 17"><path d="M8.5 0.3 L17 8.2 L15 8.2 L15 15 Q15 16 14 16 L3 16 Q2 16 2 15 L2 8.2 L0 8.2 Z" fill="#3d7b0b"/><path d="M6.2 16 L6.2 12.2 Q6.2 10.4 8.5 10.4 Q10.8 10.4 10.8 12.2 L10.8 16 Z" fill="#fff"/></svg></span><span class="t nm" style="left:150px">Sophie Gobber</span><span class="pill p"></span><span class="t dt" style="left:354px">02/16/2026</span><span class="t lnk" style="left:451px">IS270845</span><span class="t r" style="right:851px">1</span><span class="a" style="left:596.3px;top:5.5px"><svg width="19" height="18" viewBox="0 0 19 18"><ellipse cx="9.8" cy="8" rx="9" ry="8" fill="#dce2e7"/><path d="M3.5 12 L0.6 17.4 L8 15Z" fill="#dce2e7"/></svg></span><span class="a" style="left:626.3px;top:5.5px"><svg width="19" height="18" viewBox="0 0 19 18"><ellipse cx="9.8" cy="8" rx="9" ry="8" fill="#dce2e7"/><path d="M3.5 12 L0.6 17.4 L8 15Z" fill="#dce2e7"/><circle cx="5.8" cy="8" r="1.2" fill="#e6f1f8"/><circle cx="10" cy="8" r="1.2" fill="#e6f1f8"/><circle cx="14.2" cy="8" r="1.2" fill="#e6f1f8"/></svg></span><span class="t r mn" style="right:701.8px">$61.25</span><span class="t r mn" style="right:631.3px">$61.25</span><span class="t" style="left:810px">NE</span><span class="t r mn" style="right:229.8px">$6.25</span><span class="t" style="left:1212px">First Cl<span class=el>...</span></span></div><div class="row" style="top:676px"><span class="a" style="left:7px;top:10px"><svg class="chev" width="8" height="11" viewBox="0 0 8 11"><path d="M1.6 0.7 L5.5 5 L1.6 9.3" stroke="#2458d8" stroke-width="1.6" fill="none"/></svg></span><span class="a" style="left:21px;top:8px"><span class="cb"><svg width="14" height="14" viewBox="0 0 14 14"><path d="M3.4 7.4 L5.6 9.6 L10.8 4.4" stroke="#fff" stroke-width="1.25" fill="none"/></svg></span></span><span class="t age" style="left:55px">60 hr</span><span class="a" style="left:126.5px;top:7px"><svg class="ic" width="17" height="17" viewBox="0 0 17 17"><path d="M8.5 0.3 L17 8.2 L15 8.2 L15 15 Q15 16 14 16 L3 16 Q2 16 2 15 L2 8.2 L0 8.2 Z" fill="#3d7b0b"/><path d="M6.2 16 L6.2 12.2 Q6.2 10.4 8.5 10.4 Q10.8 10.4 10.8 12.2 L10.8 16 Z" fill="#fff"/></svg></span><span class="t nm" style="left:150px">Chelsea Rickey</span><span class="pill y"></span><span class="t dt" style="left:354px">02/16/2026</span><span class="t lnk" style="left:451px">IS270847</span><span class="t r b" style="right:851px">6</span><span class="a" style="left:596.3px;top:5.5px"><svg width="19" height="18" viewBox="0 0 19 18"><ellipse cx="9.8" cy="8" rx="9" ry="8" fill="#dce2e7"/><path d="M3.5 12 L0.6 17.4 L8 15Z" fill="#dce2e7"/></svg></span><span class="a" style="left:626.3px;top:5.5px"><svg width="19" height="18" viewBox="0 0 19 18"><ellipse cx="9.8" cy="8" rx="9" ry="8" fill="#dce2e7"/><path d="M3.5 12 L0.6 17.4 L8 15Z" fill="#dce2e7"/><circle cx="5.8" cy="8" r="1.2" fill="#e6f1f8"/><circle cx="10" cy="8" r="1.2" fill="#e6f1f8"/><circle cx="14.2" cy="8" r="1.2" fill="#e6f1f8"/></svg></span><span class="t r mn" style="right:701.8px">$182.96</span><span class="t r mn" style="right:631.3px">$182.96</span><span class="t" style="left:810px">TX</span><span class="t r mn" style="right:229.8px">$0.00</span><span class="t" style="left:1212px">Priority <span class=el>...</span></span></div><div class="row" style="top:707px"><span class="a" style="left:7px;top:10px"><svg class="chev" width="8" height="11" viewBox="0 0 8 11"><path d="M1.6 0.7 L5.5 5 L1.6 9.3" stroke="#2458d8" stroke-width="1.6" fill="none"/></svg></span><span class="a" style="left:21px;top:8px"><span class="cb"><svg width="14" height="14" viewBox="0 0 14 14"><path d="M3.4 7.4 L5.6 9.6 L10.8 4.4" stroke="#fff" stroke-width="1.25" fill="none"/></svg></span></span><span class="t age" style="left:55px">60 hr</span><span class="a" style="left:126.5px;top:7px"><svg class="ic" width="17" height="17" viewBox="0 0 17 17"><path d="M8.5 0.3 L17 8.2 L15 8.2 L15 15 Q15 16 14 16 L3 16 Q2 16 2 15 L2 8.2 L0 8.2 Z" fill="#3d7b0b"/><path d="M6.2 16 L6.2 12.2 Q6.2 10.4 8.5 10.4 Q10.8 10.4 10.8 12.2 L10.8 16 Z" fill="#fff"/></svg></span><span class="t nm" style="left:150px">Jill Italiano</span><span class="pill y"></span><span class="t dt" style="left:354px">02/16/2026</span><span class="t lnk" style="left:451px">IS270849</span><span class="t r b" style="right:851px">3</span><span class="a" style="left:596.3px;top:5.5px"><svg width="19" height="18" viewBox="0 0 19 18"><ellipse cx="9.8" cy="8" rx="9" ry="8" fill="#dce2e7"/><path d="M3.5 12 L0.6 17.4 L8 15Z" fill="#dce2e7"/></svg></span><span class="a" style="left:626.3px;top:5.5px"><svg width="19" height="18" viewBox="0 0 19 18"><ellipse cx="9.8" cy="8" rx="9" ry="8" fill="#dce2e7"/><path d="M3.5 12 L0.6 17.4 L8 15Z" fill="#dce2e7"/><circle cx="5.8" cy="8" r="1.2" fill="#e6f1f8"/><circle cx="10" cy="8" r="1.2" fill="#e6f1f8"/><circle cx="14.2" cy="8" r="1.2" fill="#e6f1f8"/></svg></span><span class="t r mn" style="right:701.8px">$125.59</span><span class="t r mn" style="right:631.3px">$125.59</span><span class="t" style="left:810px">MO</span><span class="t r mn" style="right:229.8px">$0.00</span><span class="t" style="left:1212px">Priority <span class=el>...</span></span></div><div class="row" style="top:738px"><span class="a" style="left:7px;top:10px"><svg class="chev" width="8" height="11" viewBox="0 0 8 11"><path d="M1.6 0.7 L5.5 5 L1.6 9.3" stroke="#2458d8" stroke-width="1.6" fill="none"/></svg></span><span class="a" style="left:21px;top:8px"><span class="cb"><svg width="14" height="14" viewBox="0 0 14 14"><path d="M3.4 7.4 L5.6 9.6 L10.8 4.4" stroke="#fff" stroke-width="1.25" fill="none"/></svg></span></span><span class="t age" style="left:55px">60 hr</span><span class="a" style="left:126.5px;top:7px"><svg class="ic" width="17" height="17" viewBox="0 0 17 17"><path d="M8.5 0.3 L17 8.2 L15 8.2 L15 15 Q15 16 14 16 L3 16 Q2 16 2 15 L2 8.2 L0 8.2 Z" fill="#3d7b0b"/><path d="M6.2 16 L6.2 12.2 Q6.2 10.4 8.5 10.4 Q10.8 10.4 10.8 12.2 L10.8 16 Z" fill="#fff"/></svg></span><span class="t nm" style="left:150px">John Wishing</span><span class="pill y"></span><span class="t dt" style="left:354px">02/16/2026</span><span class="t lnk" style="left:451px">IS270861</span><span class="t r b" style="right:851px">2</span><span class="a" style="left:596.3px;top:5.5px"><svg width="19" height="18" viewBox="0 0 19 18"><ellipse cx="9.8" cy="8" rx="9" ry="8" fill="#dce2e7"/><path d="M3.5 12 L0.6 17.4 L8 15Z" fill="#dce2e7"/></svg></span><span class="a" style="left:626.3px;top:5.5px"><svg width="19" height="18" viewBox="0 0 19 18"><ellipse cx="9.8" cy="8" rx="9" ry="8" fill="#dce2e7"/><path d="M3.5 12 L0.6 17.4 L8 15Z" fill="#dce2e7"/><circle cx="5.8" cy="8" r="1.2" fill="#e6f1f8"/><circle cx="10" cy="8" r="1.2" fill="#e6f1f8"/><circle cx="14.2" cy="8" r="1.2" fill="#e6f1f8"/></svg></span><span class="t r mn" style="right:701.8px">$71.35</span><span class="t r mn" style="right:631.3px">$71.35</span><span class="t" style="left:810px">PA</span><span class="t r mn" style="right:229.8px">$0.00</span><span class="t" style="left:1212px">Priority <span class=el>...</span></span></div><div class="row" style="top:769px"><span class="a" style="left:7px;top:10px"><svg class="chev" width="8" height="11" viewBox="0 0 8 11"><path d="M1.6 0.7 L5.5 5 L1.6 9.3" stroke="#2458d8" stroke-width="1.6" fill="none"/></svg></span><span class="a" style="left:21px;top:8px"><span class="cb"><svg width="14" height="14" viewBox="0 0 14 14"><path d="M3.4 7.4 L5.6 9.6 L10.8 4.4" stroke="#fff" stroke-width="1.25" fill="none"/></svg></span></span><span class="t age" style="left:55px">60 hr</span><span class="a" style="left:126.5px;top:7px"><svg class="ic" width="17" height="17" viewBox="0 0 17 17"><path d="M8.5 0.3 L17 8.2 L15 8.2 L15 15 Q15 16 14 16 L3 16 Q2 16 2 15 L2 8.2 L0 8.2 Z" fill="#3d7b0b"/><path d="M6.2 16 L6.2 12.2 Q6.2 10.4 8.5 10.4 Q10.8 10.4 10.8 12.2 L10.8 16 Z" fill="#fff"/></svg></span><span class="t nm" style="left:150px">Kyle Delorme</span><span class="pill y"></span><span class="t dt" style="left:354px">02/16/2026</span><span class="t lnk" style="left:451px">IS270823</span><span class="t r b" style="right:851px">4</span><span class="a" style="left:596.3px;top:5.5px"><svg width="19" height="18" viewBox="0 0 19 18"><ellipse cx="9.8" cy="8" rx="9" ry="8" fill="#dce2e7"/><path d="M3.5 12 L0.6 17.4 L8 15Z" fill="#dce2e7"/></svg></span><span class="a" style="left:626.3px;top:5.5px"><svg width="19" height="18" viewBox="0 0 19 18"><ellipse cx="9.8" cy="8" rx="9" ry="8" fill="#dce2e7"/><path d="M3.5 12 L0.6 17.4 L8 15Z" fill="#dce2e7"/><circle cx="5.8" cy="8" r="1.2" fill="#e6f1f8"/><circle cx="10" cy="8" r="1.2" fill="#e6f1f8"/><circle cx="14.2" cy="8" r="1.2" fill="#e6f1f8"/></svg></span><span class="t r mn" style="right:701.8px">$134.90</span><span class="t r mn" style="right:631.3px">$134.90</span><span class="t" style="left:810px">CA</span><span class="t r mn" style="right:229.8px">$0.00</span><span class="t" style="left:1212px">Priority <span class=el>...</span></span></div><div class="row" style="top:800px"><span class="a" style="left:21px;top:8px"><span class="cb"><svg width="14" height="14" viewBox="0 0 14 14"><path d="M3.4 7.4 L5.6 9.6 L10.8 4.4" stroke="#fff" stroke-width="1.25" fill="none"/></svg></span></span><span class="t age" style="left:55px">60 hr</span><span class="a" style="left:126.5px;top:7px"><svg class="ic" width="17" height="17" viewBox="0 0 17 17"><path d="M8.5 0.3 L17 8.2 L15 8.2 L15 15 Q15 16 14 16 L3 16 Q2 16 2 15 L2 8.2 L0 8.2 Z" fill="#3d7b0b"/><path d="M6.2 16 L6.2 12.2 Q6.2 10.4 8.5 10.4 Q10.8 10.4 10.8 12.2 L10.8 16 Z" fill="#fff"/></svg></span><span class="t nm" style="left:150px">Juliah Schilreff</span><span class="pill y"></span><span class="t dt" style="left:354px">02/16/2026</span><span class="t lnk" style="left:451px">IS270825</span><span class="t r" style="right:851px">1</span><span class="a" style="left:596.3px;top:5.5px"><svg width="19" height="18" viewBox="0 0 19 18"><ellipse cx="9.8" cy="8" rx="9" ry="8" fill="#dce2e7"/><path d="M3.5 12 L0.6 17.4 L8 15Z" fill="#dce2e7"/></svg></span><span class="a" style="left:626.3px;top:5.5px"><svg width="19" height="18" viewBox="0 0 19 18"><ellipse cx="9.8" cy="8" rx="9" ry="8" fill="#dce2e7"/><path d="M3.5 12 L0.6 17.4 L8 15Z" fill="#dce2e7"/><circle cx="5.8" cy="8" r="1.2" fill="#e6f1f8"/><circle cx="10" cy="8" r="1.2" fill="#e6f1f8"/><circle cx="14.2" cy="8" r="1.2" fill="#e6f1f8"/></svg></span><span class="t r mn" style="right:701.8px">$18.25</span><span class="t r mn" style="right:631.3px">$18.25</span><span class="t" style="left:810px">CA</span><span class="t r mn" style="right:229.8px">$0.00</span><span class="t" style="left:1212px">Priority <span class=el>...</span></span></div>
  <div class="status"><span class="st" style="left:10px">Viewing 1 - 57 of 57</span><span class="sdiv"></span><span class="st" style="left:145px">57 Selected</span></div>
</div>
<svg style="position:absolute;left:0;top:0" width="1463" height="852" viewBox="0 0 1463 852"><path d="M185.3 198.6 L90.5 197.7 M106.8 181.5 L90.5 197.7 L106.5 214.8" stroke="#c4004c" stroke-width="5.4" stroke-linecap="round" stroke-linejoin="round" fill="none"/></svg>
</body></html>
